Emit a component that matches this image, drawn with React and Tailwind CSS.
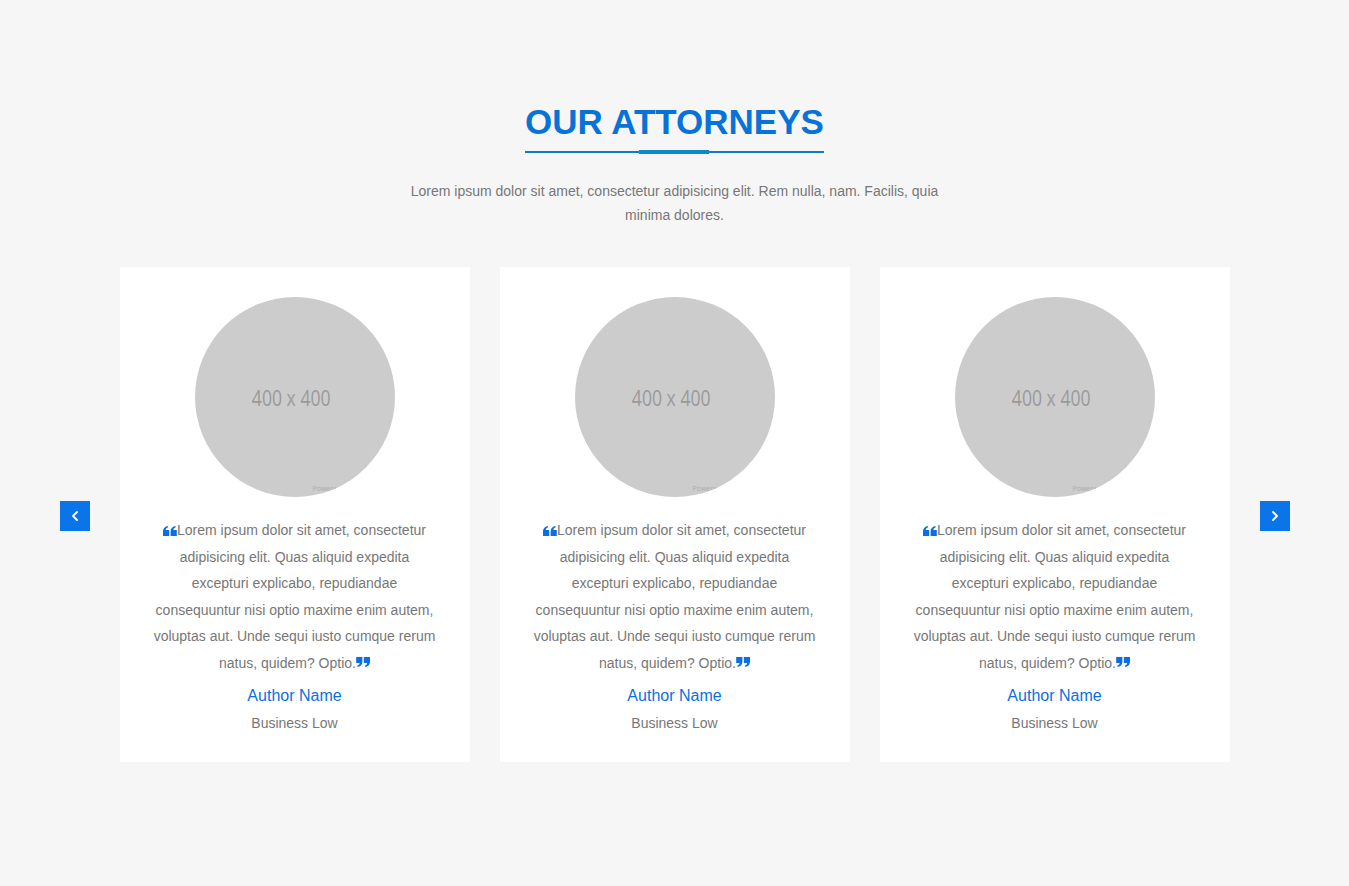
import React from 'react';
import { ChevronLeft, ChevronRight } from 'lucide-react';

const QuoteLeft = () => (
    <svg viewBox="0 0 14 10" className="inline-block w-[14px] h-[10px] align-[-1px] text-[#0b6fe3]" fill="currentColor">
        <path d="M0 10V5.6C0 2.6 1.6.7 4.7 0l.5 1.3C3.7 1.8 2.9 2.7 2.8 4.1H6.2V10Z" />
        <path d="M7.6 10V5.6C7.6 2.6 9.2.7 12.3 0l.5 1.3c-1.5.5-2.3 1.4-2.4 2.8h3.4V10Z" />
    </svg>
);

const QuoteRight = () => (
    <svg viewBox="0 0 14 10" className="inline-block w-[14px] h-[10px] align-[1px] rotate-180 text-[#0b6fe3]" fill="currentColor">
        <path d="M0 10V5.6C0 2.6 1.6.7 4.7 0l.5 1.3C3.7 1.8 2.9 2.7 2.8 4.1H6.2V10Z" />
        <path d="M7.6 10V5.6C7.6 2.6 9.2.7 12.3 0l.5 1.3c-1.5.5-2.3 1.4-2.4 2.8h3.4V10Z" />
    </svg>
);

const attorneys = [
    { name: 'Author Name', role: 'Business Low' },
    { name: 'Author Name', role: 'Business Low' },
    { name: 'Author Name', role: 'Business Low' },
];

const Card = ({ name, role }) => (
    <div className="w-[350px] bg-white px-[30px] pt-[30px] pb-[27px] flex flex-col items-center">
        {/* placeholder photo */}
        <div className="relative w-[200px] h-[200px] rounded-full bg-[#cccccc] overflow-hidden flex items-center justify-center">
            <span className="-translate-x-[3px] text-[22px] text-[#9a9a9a] scale-x-80" style={{ fontFamily: '"Open Sans", sans-serif' }}>400 x 400</span>
            <span className="absolute left-[118px] bottom-[3px] text-[7px] text-[#aaaaaa] whitespace-nowrap" style={{ fontFamily: '"Open Sans", sans-serif' }}>Powered by HTML.COM</span>
        </div>
        <p className="mt-[20px] text-center text-[14px] leading-[1.9] text-[#777777]">
            <QuoteLeft />Lorem ipsum dolor sit amet, consectetur adipisicing elit. Quas aliquid expedita excepturi explicabo, repudiandae consequuntur nisi optio maxime enim autem, voluptas aut. Unde sequi iusto cumque rerum natus, quidem? Optio.<QuoteRight />
        </p>
        <h4 className="mt-[7px] text-[16px] leading-[24px] text-[#0b6fe3]">{name}</h4>
        <span className="mt-[3px] text-[14px] leading-[24px] text-[#777777]">{role}</span>
    </div>
);

export default function App() {
    return (
        <div className="min-h-screen bg-[#f6f6f6]" style={{ fontFamily: '"Liberation Sans", Arial, sans-serif' }}>
            <section className="pt-[101px] pb-[124px] flex flex-col items-center">
                {/* HEADING */}
                <h2 className="relative inline-block text-[35px] leading-[42px] font-bold text-[#0873d7] pb-[8px] border-b-2 border-[#0b7ccf]">
                    OUR ATTORNEYS
                    <span className="absolute left-1/2 -translate-x-1/2 -bottom-[3px] w-[70px] h-[4px] bg-[#0a8ac9]" />
                </h2>
                <p className="mt-[26px] max-w-[560px] text-center text-[14px] leading-[24px] text-[#777777]">
                    Lorem ipsum dolor sit amet, consectetur adipisicing elit. Rem nulla, nam. Facilis, quia minima dolores.
                </p>

                {/* SLIDER */}
                <div className="mt-[40px] flex items-center gap-[30px]">
                    <button className="w-[30px] h-[30px] mt-[3px] bg-[#0a74e8] text-white flex items-center justify-center">
                        <ChevronLeft size={16} strokeWidth={2.75} />
                    </button>
                    <div className="flex gap-[30px]">
                        {attorneys.map((a, i) => (
                            <Card key={i} {...a} />
                        ))}
                    </div>
                    <button className="w-[30px] h-[30px] mt-[3px] bg-[#0a74e8] text-white flex items-center justify-center">
                        <ChevronRight size={16} strokeWidth={2.75} />
                    </button>
                </div>
            </section>
        </div>
    );
}
